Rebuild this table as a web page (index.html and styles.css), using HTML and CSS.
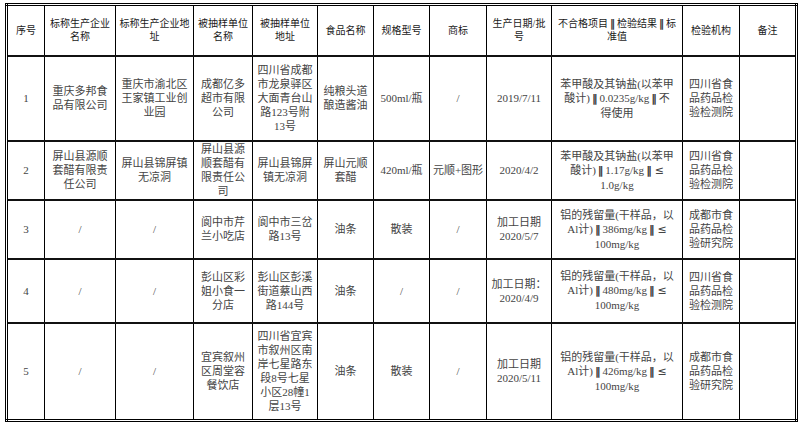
FILE: index.html
```html
<!DOCTYPE html>
<html lang="zh-CN">
<head>
<meta charset="utf-8">
<title>不合格产品信息</title>
<link rel="stylesheet" href="styles.css">
</head>
<body>
<table class="sheet">
  <colgroup>
    <col class="c1"><col class="c2"><col class="c3"><col class="c4"><col class="c5"><col class="c6">
    <col class="c7"><col class="c8"><col class="c9"><col class="c10"><col class="c11"><col class="c12">
  </colgroup>
  <thead>
    <tr class="r-head">
      <th>序号</th>
      <th>标称生产企业<br>名称</th>
      <th>标称生产企业地<br>址</th>
      <th>被抽样单位<br>名称</th>
      <th>被抽样单位<br>地址</th>
      <th>食品名称</th>
      <th>规格型号</th>
      <th>商标</th>
      <th>生产日期/批<br>号</th>
      <th>不合格项目<span class="sym">‖</span>检验结果<span class="sym">‖</span>标<br>准值</th>
      <th>检验机构</th>
      <th>备注</th>
    </tr>
  </thead>
  <tbody>
    <tr class="r1">
      <td>1</td>
      <td>重庆多邦食<br>品有限公司</td>
      <td>重庆市渝北区<br>王家镇工业创<br>业园</td>
      <td>成都亿多<br>超市有限<br>公司</td>
      <td>四川省成都<br>市龙泉驿区<br>大面青台山<br>路123号附<br>13号</td>
      <td>纯粮头道<br>酿造酱油</td>
      <td>500ml/瓶</td>
      <td>/</td>
      <td>2019/7/11</td>
      <td>苯甲酸及其钠盐(以苯甲<br>酸计)<span class="sym">‖</span>0.0235g/kg<span class="sym">‖</span>不<br>得使用</td>
      <td>四川省食<br>品药品检<br>验检测院</td>
      <td></td>
    </tr>
    <tr class="r2">
      <td>2</td>
      <td>屏山县源顺<br>套醋有限责<br>任公司</td>
      <td>屏山县锦屏镇<br>无凉洞</td>
      <td>屏山县源<br>顺套醋有<br>限责任公<br>司</td>
      <td>屏山县锦屏<br>镇无凉洞</td>
      <td>屏山元顺<br>套醋</td>
      <td>420ml/瓶</td>
      <td>元顺+图形</td>
      <td>2020/4/2</td>
      <td>苯甲酸及其钠盐(以苯甲<br>酸计)<span class="sym">‖</span>1.17g/kg<span class="sym">‖</span><span class="le">≤</span><br>1.0g/kg</td>
      <td>四川省食<br>品药品检<br>验检测院</td>
      <td></td>
    </tr>
    <tr class="r3">
      <td>3</td>
      <td>/</td>
      <td>/</td>
      <td>阆中市芹<br>兰小吃店</td>
      <td>阆中市三岔<br>路13号</td>
      <td>油条</td>
      <td>散装</td>
      <td>/</td>
      <td>加工日期<br>2020/5/7</td>
      <td>铝的残留量(干样品，以<br>Al计)<span class="sym">‖</span>386mg/kg<span class="sym">‖</span><span class="le">≤</span><br>100mg/kg</td>
      <td>成都市食<br>品药品检<br>验研究院</td>
      <td></td>
    </tr>
    <tr class="r4">
      <td>4</td>
      <td>/</td>
      <td>/</td>
      <td>彭山区彩<br>姐小食一<br>分店</td>
      <td>彭山区彭溪<br>街道蔡山西<br>路144号</td>
      <td>油条</td>
      <td>/</td>
      <td>/</td>
      <td>加工日期：<br>2020/4/9</td>
      <td>铝的残留量(干样品，以<br>Al计)<span class="sym">‖</span>480mg/kg<span class="sym">‖</span><span class="le">≤</span><br>100mg/kg</td>
      <td>四川省食<br>品药品检<br>验检测院</td>
      <td></td>
    </tr>
    <tr class="r5">
      <td>5</td>
      <td>/</td>
      <td>/</td>
      <td>宜宾叙州<br>区周堂容<br>餐饮店</td>
      <td>四川省宜宾<br>市叙州区南<br>岸七星路东<br>段8号七星<br>小区28幢1<br>层13号</td>
      <td>油条</td>
      <td>散装</td>
      <td>/</td>
      <td>加工日期<br>2020/5/11</td>
      <td>铝的残留量(干样品，以<br>Al计)<span class="sym">‖</span>426mg/kg<span class="sym">‖</span><span class="le">≤</span><br>100mg/kg</td>
      <td>成都市食<br>品药品检<br>验研究院</td>
      <td></td>
    </tr>
  </tbody>
</table>
</body>
</html>
```

FILE: styles.css
```css
html, body {
  margin: 0;
  padding: 0;
  background: #fff;
}

.sheet {
  margin: 3px 0 0 5px;
  border-collapse: collapse;
  table-layout: fixed;
  width: 792px;
  border: 3px double #000;
  font-family: "Liberation Serif", "Noto Sans CJK SC", serif;
}

.c1 { width: 38px; }
.c2 { width: 71px; }
.c3 { width: 78px; }
.c4 { width: 59px; }
.c5 { width: 65px; }
.c6 { width: 56px; }
.c7 { width: 56px; }
.c8 { width: 57px; }
.c9 { width: 65px; }
.c10 { width: 131px; }
.c11 { width: 57px; }
.c12 { width: 57px; }

.sheet th,
.sheet td {
  border-left: 1px solid #000;
  border-right: 1px solid #000;
  border-top: 2px solid #111;
  border-bottom: 2px solid #111;
  padding: 0 1px;
  text-align: center;
  vertical-align: middle;
  white-space: nowrap;
  overflow: visible;
}

.sheet th {
  font-size: 10px;
  line-height: 13px;
  font-weight: normal;
  color: #1a1a1a;
}

.sheet td {
  font-size: 11px;
  line-height: 14px;
  color: #444;
}

.sym {
  font-family: "DejaVu Sans", sans-serif;
  font-weight: bold;
  color: #333;
  margin: 0 2px;
}

.le {
  font-family: "DejaVu Sans", sans-serif;
  margin-left: 1px;
}

.r-head { height: 51px; }
.r1 { height: 85px; }
.r2 { height: 59px; }
.r3 { height: 59px; }
.r4 { height: 64px; }
.r5 { height: 98px; }
```
